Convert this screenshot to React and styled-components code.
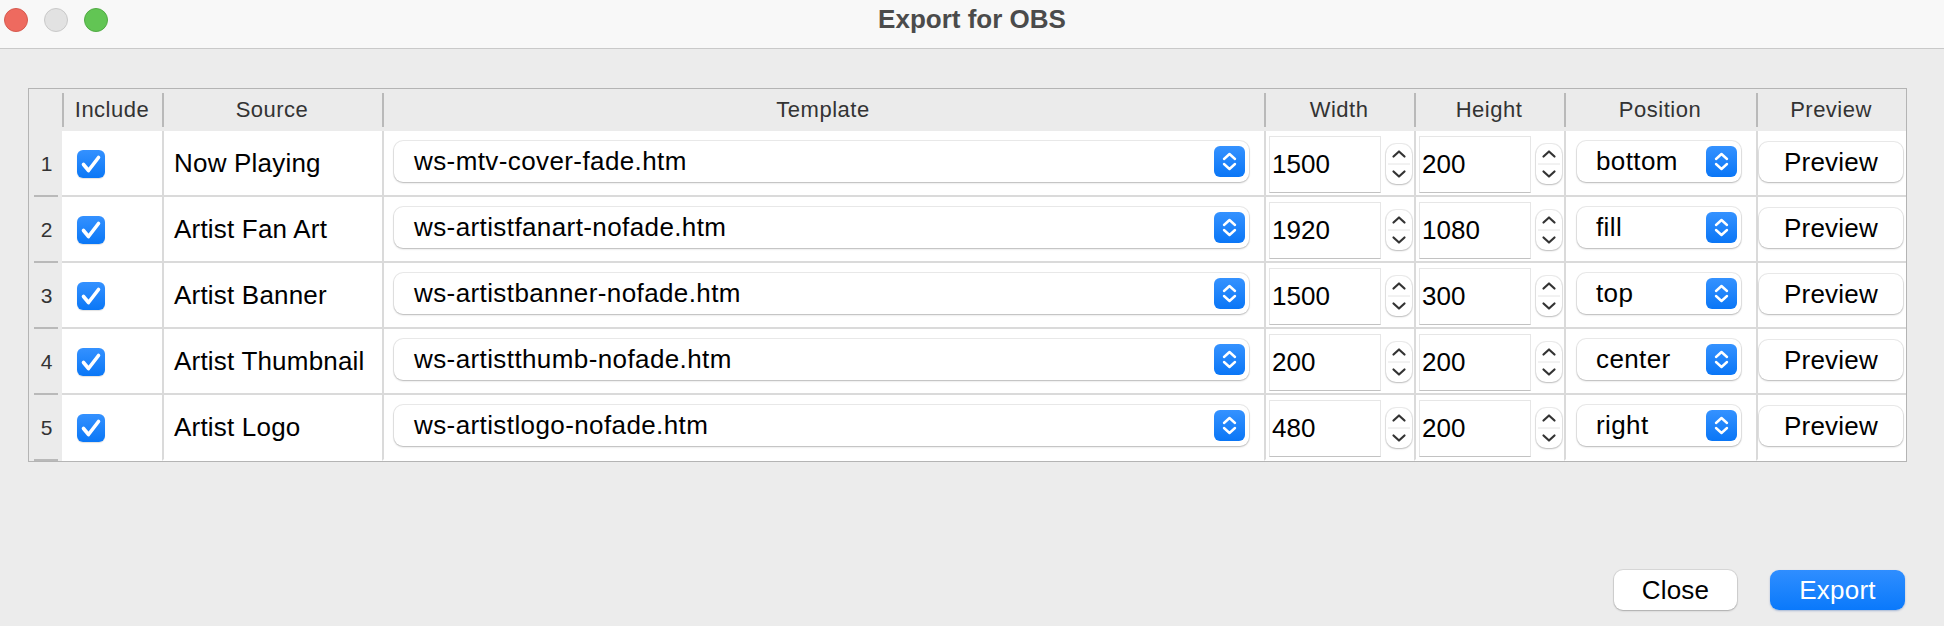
import React from "react";
import styled, { createGlobalStyle } from "styled-components";

const rows = [
  { name: "Now Playing", template: "ws-mtv-cover-fade.htm", width: "1500", height: "200", position: "bottom" },
  { name: "Artist Fan Art", template: "ws-artistfanart-nofade.htm", width: "1920", height: "1080", position: "fill" },
  { name: "Artist Banner", template: "ws-artistbanner-nofade.htm", width: "1500", height: "300", position: "top" },
  { name: "Artist Thumbnail", template: "ws-artistthumb-nofade.htm", width: "200", height: "200", position: "center" },
  { name: "Artist Logo", template: "ws-artistlogo-nofade.htm", width: "480", height: "200", position: "right" },
];

const COLS = "33px 100px 220px 882px 150px 150px 192px 150px";
const FONT = `"Liberation Sans", Arial, sans-serif`;

const Global = createGlobalStyle`
  html, body {
    margin: 0;
    padding: 0;
    background: #ececec;
  }
  body {
    font-family: ${FONT};
    color: #000;
  }
  * { box-sizing: border-box; }
`;

const Window = styled.div`
  width: 1944px;
  height: 626px;
  display: flex;
  flex-direction: column;
  background: #ececec;
`;

const TitleBar = styled.div`
  height: 49px;
  display: grid;
  grid-template-columns: 1fr auto 1fr;
  align-items: start;
  background: #f8f8f8;
  border-bottom: 1px solid #c9c9c9;
`;

const Lights = styled.div`
  display: flex;
  gap: 16px;
  padding: 8px 0 0 4px;
`;

const Light = styled.span`
  width: 24px;
  height: 24px;
  border-radius: 50%;
  background: ${(p) => p.$bg};
  border: 1px solid ${(p) => p.$edge};
`;

const Title = styled.div`
  margin-top: 4px;
  font-size: 26px;
  line-height: 30px;
  font-weight: bold;
  color: #4b4b4b;
`;

const Body = styled.div`
  flex: 1;
  display: flex;
  flex-direction: column;
  padding: 39px 37px 16px 28px;
`;

const Table = styled.div`
  width: 1879px;
  border: 1px solid #b4b4b4;
  background: #ebebeb;
`;

const HeaderRow = styled.div`
  display: grid;
  grid-template-columns: ${COLS};
  height: 42px;
  background: #ebebeb;
`;

const HeadCell = styled.div`
  display: flex;
  align-items: center;
  justify-content: center;
  font-size: 22px;
  letter-spacing: 0.5px;
  color: #333;
  background: ${(p) =>
    p.$sep ? "linear-gradient(#b9b9b9, #b9b9b9) no-repeat left center / 2px 34px" : "none"};
`;

const Row = styled.div`
  display: grid;
  grid-template-columns: ${COLS};
  height: 66px;
  &:last-child > * {
    border-bottom-color: transparent;
  }
`;

const RowNum = styled.div`
  display: flex;
  align-items: center;
  justify-content: center;
  font-size: 21px;
  color: #333;
  padding: 2px 0 0 2px;
  border-bottom: 2px solid transparent;
  background: linear-gradient(#b9b9b9, #b9b9b9) no-repeat center bottom / 24px 2px;
  background-origin: border-box;
  background-clip: border-box;
`;

const Cell = styled.div`
  display: flex;
  align-items: center;
  background: #fff;
  border-bottom: 2px solid #dadada;
  border-left: ${(p) => (p.$line ? "2px solid #dadada" : "none")};
  padding-left: ${(p) => p.$pad || 0}px;
  gap: ${(p) => p.$gap || 0}px;
  font-size: 26px;
  letter-spacing: 0.2px;
`;

const Check = styled.span`
  width: 28px;
  height: 28px;
  margin-top: 2px;
  border-radius: 6px;
  background: linear-gradient(#3491ff, #0a77f6);
  display: flex;
  box-shadow: 0 1px 1px rgba(0, 0, 0, 0.12);
`;

const Combo = styled.div`
  display: flex;
  align-items: center;
  height: 41px;
  margin-bottom: 4px;
  margin-left: ${(p) => p.$left}px;
  margin-right: ${(p) => p.$right || 0}px;
  ${(p) => (p.$width ? `width: ${p.$width}px;` : "flex: 1;")}
  padding: 0 4px 0 ${(p) => p.$pad}px;
  background: #fff;
  border-radius: 9px;
  box-shadow: 0 0 0 1px rgba(0, 0, 0, 0.08), 0 1px 2px rgba(0, 0, 0, 0.22);
  font-size: 26px;
  letter-spacing: 0.4px;
`;

const ComboText = styled.span`
  flex: 1;
  white-space: nowrap;
`;

const ComboArrows = styled.span`
  width: 31px;
  height: 31px;
  border-radius: 6px;
  background: linear-gradient(#3592ff, #0a76f6);
  display: flex;
  align-items: center;
  justify-content: center;
`;

const Field = styled.div`
  width: 112px;
  height: 57px;
  margin-top: 2px;
  padding-left: 2px;
  display: flex;
  align-items: center;
  background: #fff;
  border: 1px solid #e6e6e6;
  border-bottom-color: #c2c2c2;
  font-size: 26px;
  letter-spacing: 0;
`;

const Stepper = styled.span`
  width: 26px;
  height: 40px;
  margin-top: 2px;
  border-radius: 10px;
  background: #fff;
  box-shadow: 0 0 0 1px rgba(0, 0, 0, 0.08), 0 1px 2px rgba(0, 0, 0, 0.2);
  display: flex;
`;

const Button = styled.button`
  width: ${(p) => p.$width}px;
  height: 40px;
  margin-left: ${(p) => p.$left || 0}px;
  margin-bottom: ${(p) => p.$drop || 0}px;
  border: none;
  border-radius: 9px;
  font-family: ${FONT};
  font-size: 26px;
  letter-spacing: 0.2px;
  color: ${(p) => (p.$primary ? "#fff" : "#000")};
  background: ${(p) => (p.$primary ? "linear-gradient(#2f8eff, #0a79fb)" : "#fff")};
  box-shadow: ${(p) =>
    p.$primary
      ? "0 1px 2px rgba(0, 60, 160, 0.3)"
      : "0 0 0 1px rgba(0, 0, 0, 0.08), 0 1px 2px rgba(0, 0, 0, 0.22)"};
  padding: 0;
`;

const Footer = styled.div`
  margin-top: auto;
  display: flex;
  justify-content: flex-end;
  gap: 33px;
  padding-right: 2px;
`;

const CheckMark = () => (
  <svg width="28" height="28" viewBox="0 0 28 28">
    <path d="M6.5 14.5 L11.5 20.5 L21.5 7.5" fill="none" stroke="#fff" strokeWidth="3.6" strokeLinecap="round" strokeLinejoin="round" />
  </svg>
);

const UpDown = () => (
  <svg width="31" height="31" viewBox="0 0 31 31">
    <path d="M10 13 L15.5 8 L21 13 M10 18 L15.5 23 L21 18" fill="none" stroke="#fff" strokeWidth="2.4" strokeLinecap="round" strokeLinejoin="round" />
  </svg>
);

const StepArrows = () => (
  <svg width="26" height="40" viewBox="0 0 26 40">
    <line x1="2" y1="20" x2="24" y2="20" stroke="#e4e4e4" strokeWidth="1" />
    <path d="M7.5 12.5 L13 7.5 L18.5 12.5 M7.5 27.5 L13 32.5 L18.5 27.5" fill="none" stroke="#333" strokeWidth="2.2" strokeLinecap="round" strokeLinejoin="round" />
  </svg>
);

const Spin = ({ value }) => (
  <Cell $line $pad={3} $gap={5}>
    <Field>{value}</Field>
    <Stepper>
      <StepArrows />
    </Stepper>
  </Cell>
);

export default function App() {
  return (
    <>
      <Global />
      <Window>
        <TitleBar>
          <Lights>
            <Light $bg="#ee6a5f" $edge="#d65a4f" />
            <Light $bg="#e2e2e2" $edge="#c9c9c9" />
            <Light $bg="#62c554" $edge="#51ab44" />
          </Lights>
          <Title>Export for OBS</Title>
        </TitleBar>
        <Body>
          <Table>
            <HeaderRow>
              <HeadCell />
              <HeadCell $sep>Include</HeadCell>
              <HeadCell $sep>Source</HeadCell>
              <HeadCell $sep>Template</HeadCell>
              <HeadCell $sep>Width</HeadCell>
              <HeadCell $sep>Height</HeadCell>
              <HeadCell $sep>Position</HeadCell>
              <HeadCell $sep>Preview</HeadCell>
            </HeaderRow>
            {rows.map((r, i) => (
              <Row key={r.name}>
                <RowNum>{i + 1}</RowNum>
                <Cell $pad={15}>
                  <Check>
                    <CheckMark />
                  </Check>
                </Cell>
                <Cell $line $pad={10}>
                  {r.name}
                </Cell>
                <Cell $line>
                  <Combo $left={10} $right={15} $pad={20}>
                    <ComboText>{r.template}</ComboText>
                    <ComboArrows>
                      <UpDown />
                    </ComboArrows>
                  </Combo>
                </Cell>
                <Spin value={r.width} />
                <Spin value={r.height} />
                <Cell $line>
                  <Combo $left={11} $width={164} $pad={19}>
                    <ComboText>{r.position}</ComboText>
                    <ComboArrows>
                      <UpDown />
                    </ComboArrows>
                  </Combo>
                </Cell>
                <Cell $line>
                  <Button $width={144} $left={1} $drop={2}>
                    Preview
                  </Button>
                </Cell>
              </Row>
            ))}
          </Table>
          <Footer>
            <Button $width={123}>Close</Button>
            <Button $width={135} $primary>
              Export
            </Button>
          </Footer>
        </Body>
      </Window>
    </>
  );
}
